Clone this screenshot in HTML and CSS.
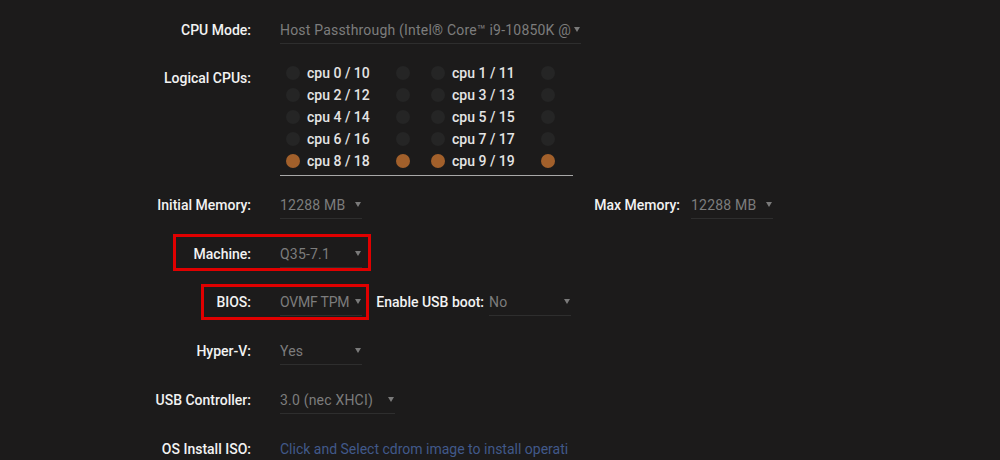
FILE: index.html
```html
<!DOCTYPE html>
<html lang="en">
<head>
    <meta charset="UTF-8">
    <meta name="viewport" content="width=device-width, initial-scale=1.0">
    <title>VM Settings</title>
    <link rel="stylesheet" href="styles.css">
</head>
<body>
    <div class="form">
        <div class="row first">
            <span class="label">CPU Mode:</span>
            <span class="select w-cpu"><span class="val">Host Passthrough (Intel® Core™ i9-10850K @</span><i class="arrow"></i></span>
        </div>

        <div class="row cpus-row">
            <span class="label cpus-label">Logical CPUs:</span>
            <div class="cpus">
                <div class="cpu"><i class="dot"></i><span class="name">cpu 0 / 10</span><i class="dot"></i></div>
                <div class="cpu"><i class="dot"></i><span class="name">cpu 1 / 11</span><i class="dot"></i></div>
                <div class="cpu"><i class="dot"></i><span class="name">cpu 2 / 12</span><i class="dot"></i></div>
                <div class="cpu"><i class="dot"></i><span class="name">cpu 3 / 13</span><i class="dot"></i></div>
                <div class="cpu"><i class="dot"></i><span class="name">cpu 4 / 14</span><i class="dot"></i></div>
                <div class="cpu"><i class="dot"></i><span class="name">cpu 5 / 15</span><i class="dot"></i></div>
                <div class="cpu"><i class="dot"></i><span class="name">cpu 6 / 16</span><i class="dot"></i></div>
                <div class="cpu"><i class="dot"></i><span class="name">cpu 7 / 17</span><i class="dot"></i></div>
                <div class="cpu"><i class="dot on"></i><span class="name">cpu 8 / 18</span><i class="dot on"></i></div>
                <div class="cpu"><i class="dot on"></i><span class="name">cpu 9 / 19</span><i class="dot on"></i></div>
            </div>
        </div>

        <div class="row mem-row">
            <span class="label">Initial Memory:</span>
            <span class="select"><span class="val">12288 MB</span><i class="arrow"></i></span>
            <span class="label inline max-label">Max Memory:</span>
            <span class="select"><span class="val">12288 MB</span><i class="arrow"></i></span>
        </div>

        <div class="row">
            <span class="mark mark-machine"></span>
            <span class="label">Machine:</span>
            <span class="select"><span class="val">Q35-7.1</span><i class="arrow"></i></span>
        </div>

        <div class="row bios-row">
            <span class="mark mark-bios"></span>
            <span class="label">BIOS:</span>
            <span class="select"><span class="val tight">OVMF TPM</span><i class="arrow"></i></span>
            <span class="label inline usb-label">Enable USB boot:</span>
            <span class="select"><span class="val">No</span><i class="arrow"></i></span>
        </div>

        <div class="row">
            <span class="label">Hyper-V:</span>
            <span class="select"><span class="val">Yes</span><i class="arrow"></i></span>
        </div>

        <div class="row">
            <span class="label">USB Controller:</span>
            <span class="select w-usb"><span class="val">3.0 (nec XHCI)</span><i class="arrow"></i></span>
        </div>

        <div class="row">
            <span class="label">OS Install ISO:</span>
            <span class="iso">Click and Select cdrom image to install operati</span>
        </div>
    </div>
</body>
</html>
```

FILE: styles.css
```css
html, body {
    margin: 0;
    height: 460px;
    overflow: hidden;
}
body {
    font-family: Roboto, "Liberation Sans", sans-serif;
    font-size: 14px;
    background-color: #1c1b1b;
    color: #f2f2f2;
}
.form {
    padding-top: 16px;
}
.row {
    position: relative;
    display: flex;
    align-items: flex-start;
    margin-top: 21px;
}
.row.first { margin-top: 0; }
.row.cpus-row { margin-top: 18px; }
.row.mem-row { margin-top: 15px; }
.row.bios-row { margin-top: 20px; }

.label {
    width: 251px;
    flex: none;
    text-align: right;
    line-height: 20px;
    padding-top: 4px;
    margin-right: 29px;
    white-space: nowrap;
    font-weight: 500;
}
.label.cpus-label { padding-top: 6px; }
.label.inline { margin-right: 0; }
.max-label { width: 318px; margin-right: 11px !important; }
.usb-label { width: 122px; margin-right: 5px !important; }

.select {
    display: flex;
    align-items: flex-start;
    width: 82px;
    height: 27px;
    border-bottom: 1px solid #2e2e2e;
    color: #7d7d7d;
}
.select .val {
    flex: 1;
    min-width: 0;
    white-space: nowrap;
    line-height: 20px;
    padding-top: 4px;
    letter-spacing: 0.2px;
}
.select .val.tight { letter-spacing: -0.2px; }
.select .arrow {
    flex: none;
    margin: 11px 1px 0 3px;
    width: 0;
    height: 0;
    border-left: 3px solid transparent;
    border-right: 3px solid transparent;
    border-top: 5px solid #7a7a7a;
}
.w-cpu { width: 301px; }
.w-usb { width: 115px; }

.cpus {
    width: 287px;
    padding: 0 0 3px 6px;
    border-bottom: 1px solid #a8a8a8;
    display: grid;
    grid-template-columns: 124px 124px;
    column-gap: 21px;
}
.cpu {
    display: flex;
    align-items: center;
    height: 22px;
    color: #e4e4e4;
}
.cpu .name {
    width: 82px;
    margin: 0 7px;
    white-space: nowrap;
    font-weight: 500;
}
.dot {
    width: 14px;
    height: 14px;
    border-radius: 50%;
    background-color: #252525;
}
.dot.on { background-color: #a2602b; }

.iso {
    width: 293px;
    white-space: nowrap;
    line-height: 20px;
    padding-top: 4px;
    color: #41598a;
}

.mark {
    position: absolute;
    border: 3px solid #e00000;
    box-sizing: border-box;
}
.mark-machine { top: -6px; left: 173px; width: 198px; height: 37px; }
.mark-bios { top: -4px; left: 201px; width: 168px; height: 36px; }
```
